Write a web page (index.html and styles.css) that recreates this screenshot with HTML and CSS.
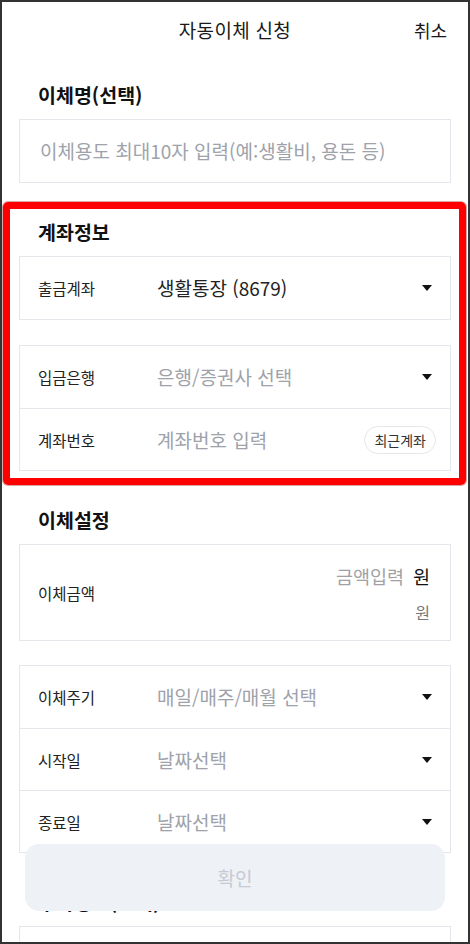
FILE: index.html
```html
<!DOCTYPE html>
<html lang="ko">
<head>
<meta charset="utf-8">
<title>자동이체 신청</title>
<link rel="stylesheet" href="styles.css">
</head>
<body>
<div class="screen">
  <header class="topbar">
    <span class="spacer"></span>
    <h1 class="title">자동이체 신청</h1>
    <span class="cancel">취소</span>
  </header>

  <main class="content">
    <section class="section section-first">
      <h2 class="section-title">이체명(선택)</h2>
      <div class="card">
        <div class="row row-input">
          <span class="placeholder">이체용도 최대10자 입력(예:생활비, 용돈 등)</span>
        </div>
      </div>
    </section>

    <section class="section highlighted">
      <h2 class="section-title">계좌정보</h2>
      <div class="cards">
        <div class="card">
          <div class="row">
            <span class="label">출금계좌</span>
            <span class="value">생활통장 (8679)</span>
            <span class="caret"></span>
          </div>
        </div>
        <div class="card">
          <div class="row">
            <span class="label">입금은행</span>
            <span class="value placeholder">은행/증권사 선택</span>
            <span class="caret"></span>
          </div>
          <div class="row">
            <span class="label">계좌번호</span>
            <span class="value placeholder">계좌번호 입력</span>
            <span class="pill">최근계좌</span>
          </div>
        </div>
      </div>
    </section>

    <section class="section">
      <h2 class="section-title">이체설정</h2>
      <div class="cards cards-tight">
        <div class="card">
          <div class="row row-amount">
            <span class="label">이체금액</span>
            <div class="amount">
              <div class="amount-line"><span class="amount-placeholder">금액입력</span><span class="won">원</span></div>
              <div class="amount-hint">원</div>
            </div>
          </div>
        </div>
        <div class="card">
          <div class="row">
            <span class="label">이체주기</span>
            <span class="value placeholder">매일/매주/매월 선택</span>
            <span class="caret"></span>
          </div>
          <div class="row">
            <span class="label">시작일</span>
            <span class="value placeholder">날짜선택</span>
            <span class="caret"></span>
          </div>
          <div class="row">
            <span class="label">종료일</span>
            <span class="value placeholder">날짜선택</span>
            <span class="caret"></span>
          </div>
        </div>
      </div>
    </section>

    <section class="section">
      <h2 class="section-title">추가정보(선택)</h2>
      <div class="card">
        <div class="row"></div>
      </div>
    </section>
  </main>

  <div class="confirm">확인</div>
</div>
</body>
</html>
```

FILE: styles.css
```css
* {
  box-sizing: border-box;
}

html, body {
  margin: 0;
  padding: 0;
  background: #ffffff;
}

body {
  font-family: "Noto Sans CJK KR", "Noto Sans", sans-serif;
  color: #222222;
}

.screen {
  position: relative;
  width: 470px;
  height: 944px;
  border: 2px solid #333333;
  overflow: hidden;
  background: #ffffff;
}

/* header */
.topbar {
  height: 56px;
  display: grid;
  grid-template-columns: 1fr auto 1fr;
  align-items: center;
  padding: 0 21px 0 21px;
}

.title {
  margin: 0;
  font-size: 19px;
  font-weight: 400;
  line-height: 24px;
  color: #1a1a1a;
  letter-spacing: 0.3px;
}

.cancel {
  justify-self: end;
  font-size: 18px;
  line-height: 24px;
  color: #1a1a1a;
}

/* content */
.content {
  padding: 0 17px;
}

.section {
  margin-top: 37px;
}

.section-first {
  margin-top: 25px;
}

.section-title {
  margin: 0 0 12px 0;
  padding-left: 19px;
  font-size: 19.5px;
  line-height: 24px;
  font-weight: 700;
  color: #111111;
}

.cards {
  display: flex;
  flex-direction: column;
  gap: 25px;
}

.cards-tight {
  gap: 24px;
}

.card {
  border: 1px solid #e3e6ea;
  background: #ffffff;
}

.row {
  min-height: 62px;
  display: flex;
  align-items: center;
  padding: 0 14px 0 18px;
}

.row + .row {
  border-top: 1px solid #e3e6ea;
}

.row-input {
  padding-left: 20px;
}

.label {
  width: 119px;
  flex-shrink: 0;
  font-size: 15.5px;
  line-height: 22px;
  color: #222222;
}

.value {
  flex: 1;
  font-size: 19px;
  line-height: 26px;
  color: #222222;
}

.placeholder {
  font-size: 19px;
  line-height: 26px;
  color: #9ea2aa;
}

.caret {
  width: 18px;
  height: 18px;
  display: flex;
  align-items: center;
  justify-content: center;
}

.caret::before {
  content: "";
  display: block;
  width: 0;
  height: 0;
  border-left: 5px solid transparent;
  border-right: 5px solid transparent;
  border-top: 6px solid #111111;
}

.pill {
  height: 28px;
  padding: 0 9px;
  display: flex;
  align-items: center;
  border: 1px solid #e6e7ea;
  border-radius: 14px;
  font-size: 14px;
  color: #333333;
  background: #ffffff;
}

/* amount */
.row-amount {
  padding: 18px 20px 17px 18px;
  align-items: center;
}

.amount {
  flex: 1;
  display: flex;
  flex-direction: column;
  align-items: flex-end;
}

.amount-line {
  display: flex;
  align-items: center;
  gap: 9px;
  line-height: 26px;
}

.amount-placeholder {
  font-size: 18.5px;
  color: #9fa1a5;
}

.won {
  font-size: 18.5px;
  color: #111111;
}

.amount-hint {
  margin-top: 12px;
  font-size: 16px;
  line-height: 22px;
  color: #777777;
}

/* highlighted section annotation */
.highlighted {
  position: relative;
}

.highlighted::after {
  content: "";
  position: absolute;
  top: -18px;
  left: -16px;
  right: -15px;
  bottom: -14px;
  border: 7px solid #ff0000;
  border-radius: 5px;
  box-shadow: 0 0 0 1px rgba(150, 0, 0, 0.35);
  pointer-events: none;
}

/* floating confirm button */
.confirm {
  position: absolute;
  left: 23px;
  right: 23px;
  bottom: 31px;
  height: 67px;
  display: flex;
  align-items: center;
  justify-content: center;
  border-radius: 14px;
  background: #eef1f6;
  color: #c6cad2;
  font-size: 19px;
}
```
